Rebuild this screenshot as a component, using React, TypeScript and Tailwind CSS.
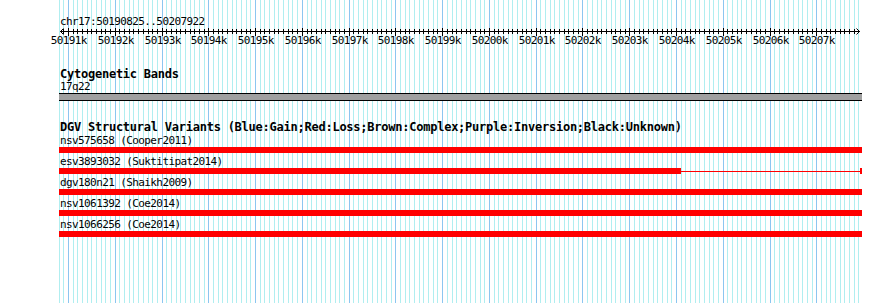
const MINOR = 4.677;
const X0 = 68;

// 100bp grid positions, i = 0 is 50191k
const ticks = Array.from({ length: 172 }, (_, j) => j - 2)
  .map((i) => ({ i, x: Math.round(X0 + i * MINOR), major: i >= 0 && i % 10 === 0 }))
  .filter((t) => t.x <= 860);

const variants = [
  { id: "nsv575658", study: "Cooper2011" },
  { id: "esv3893032", study: "Suktitipat2014", partial: true },
  { id: "dgv180n21", study: "Shaikh2009" },
  { id: "nsv1061392", study: "Coe2014" },
  { id: "nsv1066256", study: "Coe2014" },
];

function Grid() {
  return (
    <svg className="absolute inset-0" width={890} height={303} shapeRendering="crispEdges">
      {ticks.map((t) => (
        <rect key={t.i} x={t.x} y={0} width={1} height={303} fill={t.major ? "#8cc6f0" : "#b0eef0"} />
      ))}
    </svg>
  );
}

function Ruler() {
  return (
    <svg className="block" width={890} height={20} shapeRendering="crispEdges">
      <rect x={60} y={3} width={800} height={1} fill="#000" />
      {ticks
        .filter((t) => t.x > 61 && t.x < 858)
        .map((t) =>
          t.major ? (
            <rect key={t.i} x={t.x} y={0} width={1} height={8} fill="#000" />
          ) : (
            <rect key={t.i} x={t.x} y={1} width={1} height={5} fill="#000" />
          )
        )}
      <path d="M60.5 3.5 L63.5 0.5 M60.5 3.5 L63.5 6.5" stroke="#000" strokeWidth={1} shapeRendering="auto" />
      <path d="M859.5 3.5 L856.5 0.5 M859.5 3.5 L856.5 6.5" stroke="#000" strokeWidth={1} shapeRendering="auto" />
      {ticks
        .filter((t) => t.major)
        .map((t) => (
          <text
            key={t.i}
            x={t.x + 0.8}
            y={16}
            textAnchor="middle"
            fontSize={11}
            letterSpacing={-0.62}
            fontFamily="'DejaVu Sans Mono', monospace"
            fill="#000"
          >
            {50191 + t.i / 10}k
          </text>
        ))}
    </svg>
  );
}

export default function App() {
  return (
    <div className="relative w-[890px] h-[303px] overflow-hidden bg-white text-black font-['DejaVu_Sans_Mono',monospace]">
      <Grid />
      <div className="relative flex flex-col">
        <div className="mt-[15px] ml-[60px] text-[11px] leading-[13px] tracking-[-0.6px]">chr17:50190825..50207922</div>
        <Ruler />

        {/* Cytogenetic track */}
        <div className="mt-[20px] ml-[60px] text-[12px] leading-[12px] tracking-[-0.24px] font-bold">Cytogenetic Bands</div>
        <div className="ml-[60px] text-[11px] leading-[13px] tracking-[-0.6px]">17q22</div>
        <div className="ml-[59px] w-[803px] h-[8px] border-y border-black bg-[#a0a0a0]" />

        {/* DGV track */}
        <div className="mt-[20px] ml-[60px] text-[12px] leading-[12px] tracking-[-0.24px] font-bold whitespace-nowrap">
          DGV Structural Variants (Blue:Gain;Red:Loss;Brown:Complex;Purple:Inversion;Black:Unknown)
        </div>
        <div className="mt-[1px] flex flex-col gap-[2px]">
          {variants.map((v) => (
            <div key={v.id} className="flex flex-col">
              <div className="ml-[60px] text-[11px] leading-[13px] tracking-[-0.6px] whitespace-nowrap">
                {v.id} ({v.study})
              </div>
              {v.partial ? (
                <div className="ml-[59px] flex h-[6px] w-[803px] items-center">
                  <div className="h-[6px] w-[622px] bg-[#ff0000]" />
                  <div className="h-[1px] w-[179px] bg-[#ff0000]" />
                  <div className="h-[6px] w-[2px] bg-[#ff0000]" />
                </div>
              ) : (
                <div className="ml-[59px] h-[6px] w-[803px] bg-[#ff0000]" />
              )}
            </div>
          ))}
        </div>
      </div>
    </div>
  );
}
